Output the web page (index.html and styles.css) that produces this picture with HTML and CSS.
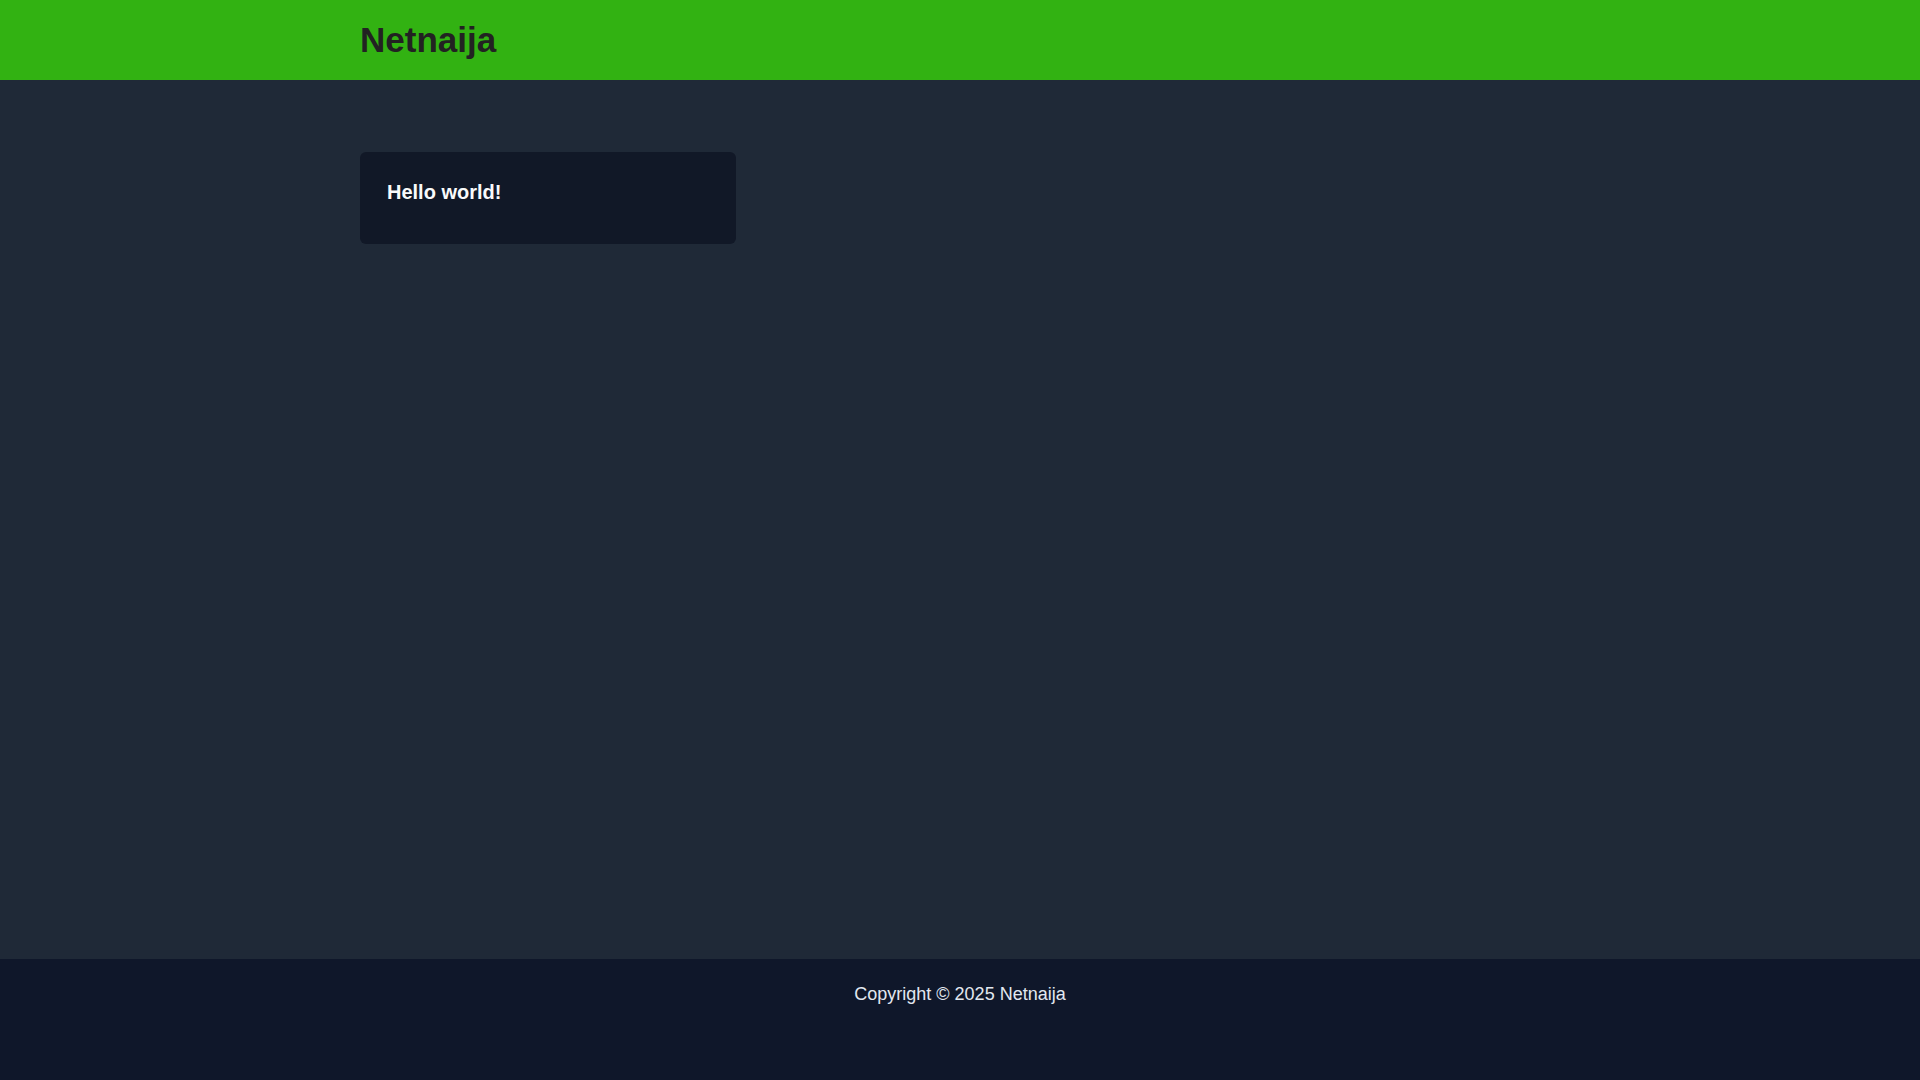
FILE: index.html
```html
<!DOCTYPE html>
<html lang="en">
<head>
<meta charset="utf-8">
<title>Netnaija</title>
<link rel="stylesheet" href="styles.css">
</head>
<body>
<header class="site-header">
  <div class="container">
    <div class="logo">Netnaija</div>
  </div>
</header>
<main class="site-main">
  <div class="container grid">
    <div class="card">
      <h2 class="card-title">Hello world!</h2>
    </div>
  </div>
</main>
<footer class="site-footer">
  <p class="copy">Copyright © 2025 Netnaija</p>
</footer>
</body>
</html>
```

FILE: styles.css
```css
* { box-sizing: border-box; }
html, body { margin: 0; padding: 0; }
body {
  min-height: 100vh;
  display: flex;
  flex-direction: column;
  background: #1f2937;
  font-family: "Liberation Sans", Arial, sans-serif;
  color: #f1f5f9;
}
.container {
  width: 1200px;
  margin: 0 auto;
}
.site-header {
  background: #32b212;
  height: 80px;
  padding-top: 20px;
}
.logo {
  font-size: 35px;
  line-height: 40px;
  font-weight: 700;
  color: #222222;
}
.site-main {
  flex: 1;
  padding-top: 72px;
}
.grid {
  display: grid;
  grid-template-columns: repeat(3, 1fr);
  gap: 36px;
}
.card {
  background: #111827;
  border-radius: 6px;
  padding: 28px 27px 26px;
}
.card-title {
  margin: 0 0 14px;
  font-size: 20px;
  line-height: 24px;
  font-weight: 700;
  color: #f9fafb;
}
.site-footer {
  background: #0f172a;
  height: 121px;
  padding-top: 25px;
  text-align: center;
}
.copy {
  margin: 0;
  font-size: 18px;
  color: #e2e8f0;
}
```
